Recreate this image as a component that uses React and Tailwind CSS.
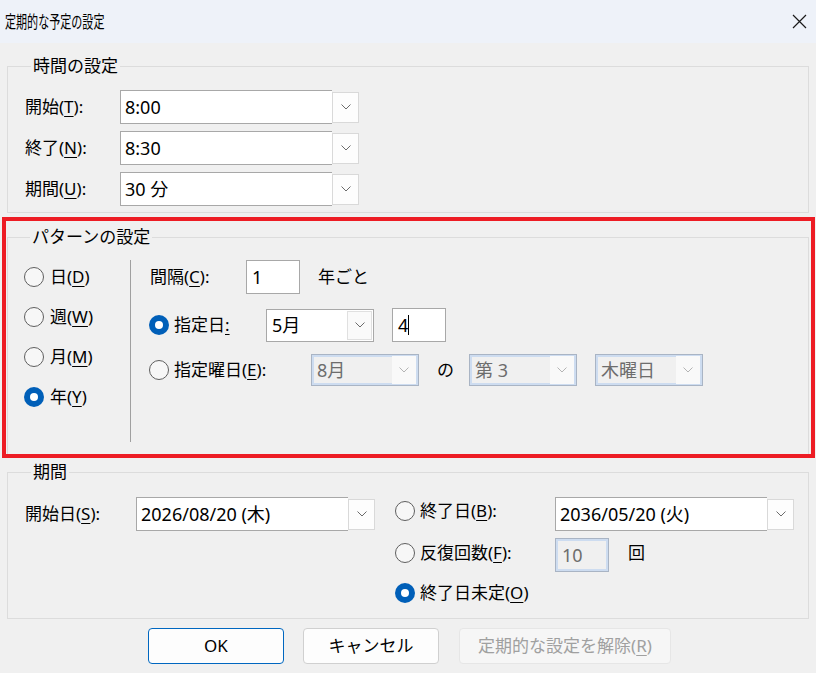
import React from "react";

const Chevron = ({ color = "#6b6b6b" }) => (
  <svg width="10" height="6" viewBox="0 0 10 6">
    <path d="M0.5 0.5 L5 5 L9.5 0.5" fill="none" stroke={color} strokeWidth="1" />
  </svg>
);

const Key = ({ children }) => (
  <span className="underline underline-offset-[3px] decoration-1">{children}</span>
);

const Radio = ({ checked }) =>
  checked ? (
    <span className="w-[20px] h-[20px] rounded-full bg-[#005fb8] flex items-center justify-center shrink-0">
      <span className="w-[8px] h-[8px] rounded-full bg-white" />
    </span>
  ) : (
    <span className="w-[20px] h-[20px] rounded-full border border-[#5f5f5f] bg-[#f7f7f7] shrink-0" />
  );

// input box + separate dropdown button (time/date pickers)
const SplitCombo = ({ value }) => (
  <div className="flex items-center h-[34px]">
    <div className="w-[212px] h-[34px] border border-r-0 border-[#a8a8a8] bg-white pl-[4px] flex items-center text-[18px]">
      {value}
    </div>
    <div className="w-[27px] h-[31px] border border-[#d9d9d9] bg-[#fdfdfd] flex items-center justify-center">
      <Chevron />
    </div>
  </div>
);

// dropdown with its button inside the border
const BoxCombo = ({ value, disabled }) =>
  disabled ? (
    <div className="w-[108px] h-[32px] border border-[#a9b4c4] bg-[#f0f0f0] shadow-[inset_0_0_0_2px_#cddcf0] flex items-center justify-between pl-[5px] pr-[2px] text-[18px] text-[#6d6d6d]">
      <span>{value}</span>
      <span className="w-[24px] h-[28px] bg-[#f9f9f9] flex items-center justify-center">
        <Chevron color="#b4b4b4" />
      </span>
    </div>
  ) : (
    <div className="w-[108px] h-[33px] border border-[#a8a8a8] bg-white flex items-center justify-between pl-[5px] pr-[1px] text-[18px]">
      <span>{value}</span>
      <span className="w-[25px] h-[29px] border border-[#e0e0e0] bg-[#fafafa] flex items-center justify-center">
        <Chevron />
      </span>
    </div>
  );

const Group = ({ title, className, children }) => (
  <fieldset className={`border border-[#dcdcdc] mx-[7px] w-[802px] ${className}`}>
    <legend className="ml-[6px] px-[2px] leading-[20px]">{title}</legend>
    {children}
  </fieldset>
);

export default function App() {
  return (
    <div className="w-[816px] h-[673px] bg-[#f0f0f0] relative overflow-hidden text-[17px] leading-[20px] text-black font-['Noto_Sans','Noto_Sans_CJK_JP',sans-serif]">
      {/* Title bar */}
      <div className="h-[43px] bg-[#eef2f9] flex items-center justify-between pl-[5px] pr-[9px]">
        <span className="inline-block text-[17px] scale-x-[0.65] origin-left whitespace-nowrap">
          定期的な予定の設定
        </span>
        <svg width="15" height="15" viewBox="0 0 15 15">
          <path d="M1 1 L14 14 M14 1 L1 14" stroke="#1a1a1a" strokeWidth="1.2" />
        </svg>
      </div>

      {/* 時間の設定 */}
      <Group title="時間の設定" className="mt-[13px] pt-[14px] pb-[6px] pl-[17px]">
        <div className="flex flex-col gap-[7px]">
          {[
            ["開始", "T", "8:00"],
            ["終了", "N", "8:30"],
            ["期間", "U", "30 分"],
          ].map(([l, k, v]) => (
            <div key={k} className="flex items-center">
              <span className="w-[95px]">
                {l}(<Key>{k}</Key>):
              </span>
              <SplitCombo value={v} />
            </div>
          ))}
        </div>
      </Group>

      {/* パターンの設定 */}
      <Group title="パターンの設定" className="mt-[14px] pt-[10px] pb-[12px] pl-[16px]">
        <div className="flex items-start">
          <div className="w-[106px] flex flex-col">
            {[
              ["日", "D", false],
              ["週", "W", false],
              ["月", "M", false],
              ["年", "Y", true],
            ].map(([l, k, c]) => (
              <div key={k} className="h-[40px] flex items-center gap-[6px]">
                <Radio checked={c} />
                <span>
                  {l}(<Key>{k}</Key>)
                </span>
              </div>
            ))}
          </div>
          <div className="mt-[3px] h-[182px] w-px bg-[#a0a0a0]" />
          <div className="pl-[19px] pt-[3px] flex flex-col">
            <div className="h-[34px] flex items-center">
              <span className="w-[96px]">
                間隔(<Key>C</Key>):
              </span>
              <div className="w-[54px] h-[34px] border border-[#a8a8a8] bg-white pl-[5px] flex items-center text-[18px]">
                1
              </div>
              <span className="ml-[18px]">年ごと</span>
            </div>
            <div className="mt-[14px] h-[34px] flex items-center">
              <div className="w-[117px] flex items-center gap-[5px] -ml-px">
                <Radio checked />
                <span>
                  指定日<Key>:</Key>
                </span>
              </div>
              <BoxCombo value="5月" />
              <div className="ml-[18px] w-[54px] h-[34px] border border-[#a8a8a8] bg-white pl-[5px] flex items-center text-[18px]">
                4<span className="w-px h-[20px] bg-black" />
              </div>
            </div>
            <div className="mt-[11px] h-[34px] flex items-center">
              <div className="w-[162px] flex items-center gap-[5px] -ml-px">
                <Radio />
                <span>
                  指定曜日(<Key>E</Key>):
                </span>
              </div>
              <BoxCombo value="8月" disabled />
              <span className="ml-[18px] w-[16px]">の</span>
              <div className="ml-[16px]">
                <BoxCombo value="第 3" disabled />
              </div>
              <div className="ml-[18px]">
                <BoxCombo value="木曜日" disabled />
              </div>
            </div>
          </div>
        </div>
      </Group>

      {/* 期間 */}
      <Group title="期間" className="mt-[7px] pt-[15px] pb-[8px] pl-[17px]">
        <div className="flex items-start">
          <div className="h-[34px] flex items-center">
            <span className="w-[111px]">
              開始日(<Key>S</Key>):
            </span>
            <SplitCombo value="2026/08/20 (木)" />
          </div>
          <div className="ml-[20px] flex flex-col">
            <div className="h-[34px] flex items-center">
              <div className="w-[160px] flex items-center gap-[5px] mb-[6px]">
                <Radio />
                <span>
                  終了日(<Key>B</Key>):
                </span>
              </div>
              <SplitCombo value="2036/05/20 (火)" />
            </div>
            <div className="mt-[7px] h-[34px] flex items-center">
              <div className="w-[160px] flex items-center gap-[5px] mb-[4px]">
                <Radio />
                <span>
                  反復回数(<Key>F</Key>):
                </span>
              </div>
              <div className="w-[54px] h-[34px] border border-[#a9b4c4] bg-[#f0f0f0] shadow-[inset_0_0_0_2px_#cddcf0] pl-[6px] flex items-center text-[18px] text-[#6d6d6d]">
                10
              </div>
              <span className="ml-[19px] mb-[4px]">回</span>
            </div>
            <div className="mt-[4px] h-[34px] flex items-center gap-[5px]">
              <Radio checked />
              <span>
                終了日未定(<Key>O</Key>)
              </span>
            </div>
          </div>
        </div>
      </Group>

      {/* Buttons */}
      <div className="mt-[9px] pl-[148px] flex gap-[19px]">
        <button className="w-[136px] h-[36px] rounded-[4px] border border-[#0067c0] bg-[#fdfdfd]">
          OK
        </button>
        <button className="w-[136px] h-[36px] rounded-[4px] border border-[#d0d0d0] bg-[#fdfdfd]">
          キャンセル
        </button>
        <button className="ml-px w-[212px] h-[36px] rounded-[4px] border border-[#e6e6e6] bg-[#f6f6f6] text-[#a0a0a0]">
          定期的な設定を解除(<Key>R</Key>)
        </button>
      </div>

      {/* red highlight annotation */}
      <div className="absolute left-[2px] top-[217px] w-[813px] h-[241px] border-4 border-[#ed1c24] pointer-events-none" />
    </div>
  );
}
